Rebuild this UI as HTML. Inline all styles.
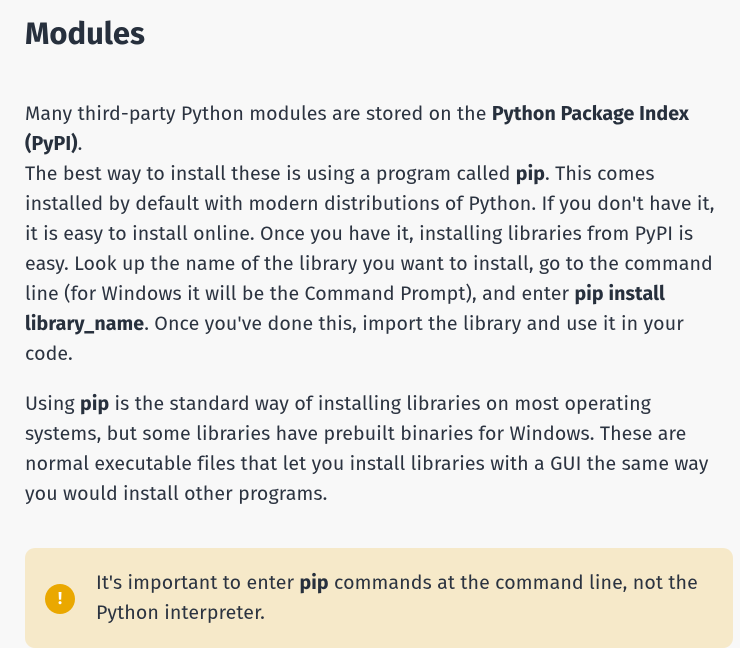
<!DOCTYPE html>
<html><head><style>
body{margin:0;background:#f8f8f8;width:740px;height:637px;overflow:hidden;font-family:"Fira Sans","Liberation Sans",sans-serif;color:#2b3340;}
h1{position:absolute;left:25px;top:15px;margin:0;font-size:31px;font-weight:bold;line-height:40px;color:#27303d;}
.p{position:absolute;left:25px;font-size:19.6px;line-height:30px;white-space:nowrap;letter-spacing:0.1px}
b{color:#27303d}
.box{position:absolute;left:25px;top:548px;width:708px;height:100px;background:#f6e9c9;border-radius:10px;}
.ic{position:absolute;left:45px;top:584px;width:30px;height:30px;border-radius:50%;background:#eaa800;color:#fff;font-weight:bold;font-size:17px;text-align:center;line-height:30px}
</style></head><body>
<h1>Modules</h1>
<div class="p" style="top:100px">Many third-party Python modules are stored on the <b>Python Package Index</b><br><b>(PyPI)</b>.<br>The best way to install these is using a program called <b>pip</b>. This comes<br>installed by default with modern distributions of Python. If you don't have it,<br>it is easy to install online. Once you have it, installing libraries from PyPI is<br>easy. Look up the name of the library you want to install, go to the command<br>line (for Windows it will be the Command Prompt), and enter <b>pip install</b><br><b>library_name</b>. Once you've done this, import the library and use it in your<br>code.</div>
<div class="p" style="top:390px">Using <b>pip</b> is the standard way of installing libraries on most operating<br>systems, but some libraries have prebuilt binaries for Windows. These are<br>normal executable files that let you install libraries with a GUI the same way<br>you would install other programs.</div>
<div class="box"></div>
<div class="ic">!</div>
<div class="p" style="top:569px;left:96px">It's important to enter <b>pip</b> commands at the command line, not the<br>Python interpreter.</div>
</body></html>
